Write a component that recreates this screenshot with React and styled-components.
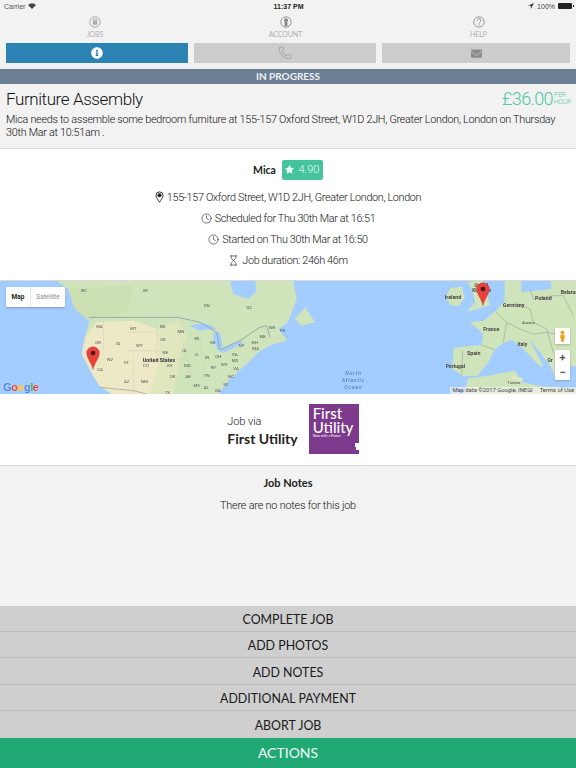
import React from "react";
import styled, { createGlobalStyle } from "styled-components";
import { Clock, Hourglass, Phone } from "lucide-react";
import { FaInfoCircle, FaEnvelope, FaStar } from "react-icons/fa";

const Global = createGlobalStyle`
  html, body { margin: 0; padding: 0; background: #f2f2f2; }
  * { box-sizing: border-box; }
  body { font-family: "Lato", "Noto Sans", sans-serif; color: #222; }
`;
const Page = styled.div`
  width: 576px; height: 768px; display: flex; flex-direction: column; overflow: hidden; background: #f2f2f2;
`;
const StatusBar = styled.div`
  height: 12px; display: grid; grid-template-columns: 1fr auto 1fr; align-items: center; padding: 0 3px 0 4px;
  font-family: "Liberation Sans", sans-serif; font-size: 7px; color: #333;
`;
const StatusLeft = styled.div`display: flex; align-items: center; gap: 3px; color: #555;`;
const StatusTime = styled.div`font-weight: 700; font-size: 7px; color: #222;`;
const StatusRight = styled.div`display: flex; align-items: center; gap: 3px; justify-content: flex-end; color: #444;`;
const Battery = styled.div`
  width: 14px; height: 6px; background: #222; border-radius: 1px; position: relative; margin-right: 1px;
  &::after { content: ""; position: absolute; right: -1.5px; top: 2px; width: 1px; height: 2px; background: #222; }
`;
const Nav = styled.nav`
  height: 31px; display: grid; grid-template-columns: 190px 191px 195px; padding-top: 4px;
`;
const NavItem = styled.div`
  display: flex; flex-direction: column; align-items: center; gap: 2px;
  font-size: 7px; color: #b0b0b0; line-height: 8px; letter-spacing: -0.1px;
  svg { display: block; }
`;
const Tabs = styled.div`
  height: 20px; display: grid; grid-template-columns: 182px 182px 188px; gap: 6px; padding: 0 6px;
`;
const Tab = styled.div`
  background: ${p => (p.$active ? "#2a83b2" : "#cccccc")};
  color: ${p => (p.$active ? "#fff" : "#8c8c8c")};
  display: flex; align-items: center; justify-content: center;
`;
const StatusStrip = styled.div`
  margin-top: 6px; height: 14.5px; background: #6b7f93; color: #f0f0f0; font-size: 10px; font-weight: 700;
  display: flex; align-items: center; justify-content: center;
`;
const JobHead = styled.section`
  height: 65px; padding: 5px 6px 0; border-bottom: 1px solid #dcdcdc; background: #f2f2f2;
`;
const TitleRow = styled.div`display: flex; justify-content: space-between; align-items: center; height: 20px;`;
const Title = styled.h1`margin: 0; font-family: "Roboto", sans-serif; font-size: 17px; font-weight: 300; color: #111; letter-spacing: -0.4px;`;
const Price = styled.div`display: flex; align-items: center; color: #4cc9a2; font-family: "Roboto", sans-serif; font-size: 18px; font-weight: 300; letter-spacing: -0.6px;`;
const PerHour = styled.span`font-size: 6.5px; line-height: 6.5px; width: 17px; padding-left: 1px; letter-spacing: -0.1px;`;
const Desc = styled.p`
  margin: 4px 0 0; font-family: "Roboto", sans-serif; font-size: 10.8px; font-weight: 300; line-height: 13.2px; color: #111; letter-spacing: -0.27px;
`;
const Details = styled.section`
  height: 132px; background: #fff; border-bottom: 1px solid #d8d8d8; display: flex; flex-direction: column; align-items: center; padding-top: 11px;
`;
const PersonRow = styled.div`display: flex; align-items: center; gap: 6px; height: 20px; margin-bottom: 7px;`;
const PersonName = styled.strong`font-size: 10.5px; color: #222;`;
const Rating = styled.div`
  width: 41px; height: 20px; background: #44c39d; border-radius: 2px; color: #e6fff6; font-family: "Roboto", sans-serif; font-weight: 300; font-size: 11px;
  display: flex; align-items: center; justify-content: center; gap: 4px;
`;
const InfoLine = styled.div`
  height: 21px; display: flex; align-items: center; gap: 3px; font-family: "Roboto", sans-serif; font-weight: 300; font-size: 10.8px; color: #111; letter-spacing: -0.33px;
  svg { flex: none; }
`;
const MapArea = styled.div`height: 113px; position: relative; overflow: hidden; background: #a3ccff;`;
const MapSvg = styled.svg`display: block; width: 576px; height: 113px; filter: blur(0.35px);`;
const MapToggle = styled.div`
  position: absolute; left: 6px; top: 6px; width: 59px; height: 20px; background: #fff; display: flex;
  font-family: "Roboto", sans-serif; font-size: 6.5px; box-shadow: 0 1px 2px rgba(0,0,0,.25); border-radius: 1px;
`;
const MapToggleItem = styled.div`
  display: flex; align-items: center; justify-content: center;
  width: ${p => (p.$active ? "25px" : "34px")};
  color: ${p => (p.$active ? "#222" : "#8a8a8a")};
  font-weight: ${p => (p.$active ? 700 : 400)};
  border-right: ${p => (p.$active ? "1px solid #e4e4e4" : "none")};
`;
const MapControl = styled.div`
  position: absolute; right: 6px; top: ${p => p.$top}px; background: #fff; box-shadow: 0 1px 2px rgba(0,0,0,.2); display: flex; flex-direction: column; align-items: center;
`;
const ZoomBtn = styled.div`
  height: 15px; width: 15px; display: flex; align-items: center; justify-content: center; color: #555;
  font: 700 11px "Roboto", sans-serif;
`;
const Attribution = styled.div`
  position: absolute; right: 0; bottom: 0; height: 7px; background: rgba(245,245,245,.65); font: 5.8px/7px "Roboto", sans-serif; color: #444;
  display: flex; gap: 7px; padding: 0 2px;
`;
const GoogleLogo = styled.div`
  position: absolute; left: 3px; bottom: 1px; font: 700 11px "Liberation Sans", sans-serif; letter-spacing: -0.4px;
  text-shadow: 0 0 1px #fff;
`;
const GLetter = styled.span`color: ${p => p.$c};`;
const Via = styled.section`
  height: 72px; background: #fff; border-bottom: 1px solid #d8d8d8; display: flex; align-items: center; justify-content: center; gap: 11px; padding-left: 10px;
`;
const ViaText = styled.div`display: flex; flex-direction: column; gap: 2px; padding-top: 3px;`;
const ViaSmall = styled.span`font-family: "Roboto", sans-serif; font-weight: 300; font-size: 11px; color: #222; line-height: 13px; letter-spacing: -0.1px;`;
const ViaName = styled.span`font-size: 14px; font-weight: 700; color: #222; line-height: 17px;`;
const Logo = styled.div`
  width: 50px; height: 50px; background: #7d3a8c; color: #fff; position: relative; padding: 2px 0 0 4px; font-family: "Lato", sans-serif;
  font-size: 15px; line-height: 14px; font-weight: 500;
  &::after { content: ""; position: absolute; right: 0; bottom: 4px; width: 3px; height: 3px; background: #fff; }
  &::before { content: ""; position: absolute; right: 0; bottom: 7px; width: 4px; height: 4px; background: #fff; }
`;
const LogoLine = styled.div`white-space: nowrap;`;
const LogoTag = styled.div`font-size: 3.5px; line-height: 5px; font-weight: 400;`;
const Notes = styled.section`flex: 1; display: flex; flex-direction: column; align-items: center; padding-top: 10px;`;
const NotesTitle = styled.strong`font-size: 11px; color: #222; line-height: 14px;`;
const NotesText = styled.div`font-family: "Roboto", sans-serif; font-weight: 300; font-size: 10.8px; color: #111; margin-top: 9px; line-height: 14px; letter-spacing: -0.18px;`;
const Actions = styled.div`display: flex; flex-direction: column;`;
const ActionButton = styled.div`
  height: 26.4px; background: #cfcfcf; border-bottom: 1px solid #bdbdbd; color: #1a1a1a; font-size: 12.4px; font-weight: 400; padding-top: 2px;
  display: flex; align-items: center; justify-content: center;
  &:last-child { border-bottom: none; }
`;
const ActionsBar = styled.div`
  height: 30.5px; background: #20a975; color: #f2fff9; font-size: 14px; display: flex; align-items: center; justify-content: center;
`;

const GREEN = "#d0e4bb";
const BLUE = "#a3ccff";
const Land = ({ d, fill = GREEN }) => <path d={d} fill={fill} />;
const Label = ({ x, y, children, size = 13, bold, color = "#555" }) => (
  <text x={x} y={y} textAnchor="middle" fontFamily="Roboto, sans-serif" fontSize={size} fontWeight={bold ? 700 : 400} fill={color}>{children}</text>
);
const OceanLabel = ({ y, children }) => (
  <text x="1060" y={y} textAnchor="middle" fontFamily="Roboto, sans-serif" fontStyle="italic" fontSize="16" letterSpacing="2" fill="#4b76b8">{children}</text>
);
const Pin = ({ x, y }) => (
  <g transform={`translate(${x} ${y})`}>
    <path d="M0 0C-3-18-19-34-19-50A19 19 0 1 1 19-50C19-34 3-18 0 0Z" fill="#e8413a" stroke="#c5352e" strokeWidth="1" />
    <circle cx="0" cy="-50" r="7" fill="#4a1210" />
  </g>
);
const usStates = [
  ["BC",252,38],["SK",436,40],["ON",620,84],["QC",748,90],["WA",298,146],["MT",400,152],["ND",488,146],["MN",543,162],
  ["OR",294,194],["ID",355,199],["WY",418,204],["SD",489,186],["WI",590,182],["MI",638,194],["NE",496,224],["IA",553,218],
  ["NV",330,246],["UT",379,255],["CO",438,263],["KS",510,263],["MO",562,265],["IL",591,232],["IN",622,240],["OH",655,236],
  ["CA",300,276],["AZ",380,312],["NM",433,312],["OK",518,298],["AR",564,298],["TN",620,295],["KY",640,270],["WV",673,262],
  ["PA",705,232],["MD",705,248],["NY",725,204],["NH",764,194],["MA",767,214],["ME",788,178],["NB",816,150],["PE",848,160],
  ["VA",708,274],["NC",693,296],["SC",678,320],["MS",590,324],["AL",619,330],["GA",654,338],["TX",502,345],
];
const countries = [
  ["Ireland",1359,61,16],["Germany",1541,84,16],["Poland",1630,63,16],["Belarus",1708,45,15],["France",1474,157,16],
  ["Italy",1567,202,15],["Spain",1421,229,16],["Portugal",1366,266,15],["Gr",1650,250,15],
];

const WorldMap = () => (
  <MapSvg viewBox="0 6 1728 339" preserveAspectRatio="none">
    <rect x="0" y="6" width="1728" height="339" fill={BLUE} />
    {/* North America */}
    <Land d="M170 6 L205 30 L225 90 L268 125 L255 175 L245 225 L282 295 L300 322 L335 345 L655 345 L690 300 L745 250 L780 215 L820 195 L862 185 L835 150 L864 130 L890 60 L880 6 Z" />
    <Land d="M690 6 L765 6 L770 35 L745 60 L700 45 Z" fill={BLUE} />
    <Land d="M885 120 L915 85 L945 130 L905 140 Z" />
    <Land d="M205 30 L400 20 L380 100 L300 112 L268 125 L225 90 Z" fill="#cbdfb3" />
    <Land d="M255 175 L290 130 L400 125 L470 150 L480 240 L450 345 L335 345 L300 322 L282 295 L245 225 Z" fill="#ede8c6" />
    <Land d="M470 150 L535 125 L560 170 L540 240 L520 345 L450 345 L480 240 Z" fill="#e0e7bf" />
    {/* Great lakes */}
    <Land d="M570 142 C600 125 640 135 650 152 L625 150 L600 155 Z" fill={BLUE} />
    <Land d="M640 160 L660 160 L668 200 L654 215 L642 190 Z" fill={BLUE} />
    <Land d="M655 215 L720 185 L730 192 L670 222 Z" fill={BLUE} />
    <path d="M268 115 L535 115 L600 130 L650 160 L660 212 L720 185 L780 145 L800 140 L810 175" fill="none" stroke="#8d9aa0" strokeWidth="2.4" />
    <path d="M300 325 L400 335 L440 345" fill="none" stroke="#9a9a9a" strokeWidth="2" />
    <path d="M310 125 L310 215 M380 160 L470 160 M470 120 L470 240 M380 215 L480 215 M400 230 L400 345 M480 240 L560 240 M540 160 L560 240 L580 300 M600 180 L610 270" fill="none" stroke="#c2c5a8" strokeWidth="1" />
    {/* Ireland, Britain */}
    <Land d="M1338 55 L1350 28 L1385 22 L1394 55 L1375 82 L1350 78 Z" />
    <Land d="M1404 10 L1424 6 L1448 6 L1462 50 L1470 78 L1440 88 L1400 98 L1426 70 L1418 40 Z" />
    {/* Europe */}
    <Land d="M1489 95 L1514 65 L1514 6 L1564 6 L1564 40 L1654 30 L1654 6 L1728 6 L1728 262 L1690 262 L1668 300 L1652 262 L1620 220 L1588 180 L1630 262 L1620 262 L1565 205 L1535 182 L1505 195 L1482 212 L1445 200 L1450 165 L1410 130 L1450 125 L1470 110 Z" />
    <Land d="M1362 206 L1445 198 L1484 212 L1462 255 L1432 290 L1388 292 L1356 268 Z" />
    <Land d="M1394 345 L1404 298 L1465 290 L1545 275 L1565 310 L1625 322 L1728 330 L1728 345 Z" />
    <Land d="M1535 292 L1570 298 L1563 310 L1540 302 Z" fill="#dfe6c4" />
    <path d="M1489 100 L1520 130 L1510 190 M1520 130 L1560 150 L1600 165 L1640 160 L1700 170 M1540 70 L1590 90 L1600 130 L1640 150 M1600 60 L1660 50 L1690 50 L1720 110 M1590 30 L1600 60 M1445 198 L1484 212 M1388 215 L1385 290 M1640 150 L1660 220" fill="none" stroke="#8f9a88" strokeWidth="1.6" />
    <g>
      {usStates.map(([t, x, y]) => <Label key={t} x={x} y={y}>{t}</Label>)}
      <Label x={477} y={248} size={16} bold color="#333">United States</Label>
      <Label x={1444} y={25} size={14} bold color="#444">United</Label>
      <Label x={1445} y={40} size={14} bold color="#444">Kingdom</Label>
      {countries.map(([t, x, y, s]) => <Label key={t} x={x} y={y} size={s} bold color="#444">{t}</Label>)}
      <Label x={1542} y={314} size={12} color="#444">Tunisia</Label>
      <Label x={1585} y={134} size={12} color="#444">Austria</Label>
      <OceanLabel y={287}>North</OceanLabel>
      <OceanLabel y={308}>Atlantic</OceanLabel>
      <OceanLabel y={330}>Ocean</OceanLabel>
    </g>
    <Pin x={279} y={272} />
    <Pin x={1449} y={80} />
  </MapSvg>
);

const JobsIcon = () => (
  <svg width="12" height="12" viewBox="0 0 12 12"><circle cx="6" cy="6" r="5.2" fill="none" stroke="#aaa" /><rect x="3.8" y="2.8" width="4.4" height="6" rx=".6" fill="#aaa" /><rect x="4.6" y="3.6" width="2.8" height="1.4" fill="#ddd" /></svg>
);
const AccountIcon = () => (
  <svg width="12" height="12" viewBox="0 0 12 12"><circle cx="6" cy="6" r="5.2" fill="none" stroke="#999" /><circle cx="6" cy="4.2" r="2" fill="#888" /><path d="M4.6 6h2.8v4.2H4.6z" fill="#888" /></svg>
);
const HelpIcon = () => (
  <svg width="12" height="12" viewBox="0 0 12 12"><circle cx="6" cy="6" r="5.2" fill="none" stroke="#999" /><path d="M4.2 4.6A1.9 1.9 0 1 1 6.9 6.3C6.2 6.7 6 7 6 7.6" fill="none" stroke="#999" strokeWidth="1" /><circle cx="6" cy="9" r=".7" fill="#999" /></svg>
);
const PinIcon = () => (
  <svg width="9" height="12" viewBox="0 0 9 12"><path d="M4.5 11.2C3 8.6 1 6.8 1 4.4A3.5 3.5 0 0 1 8 4.4C8 6.8 6 8.6 4.5 11.2Z" fill="none" stroke="#333" strokeWidth="1" /><circle cx="4.5" cy="4.2" r="2" fill="#222" /></svg>
);
const Wifi = () => (
  <svg width="8" height="6" viewBox="0 0 8 6"><path d="M0 2A5.6 5.6 0 0 1 8 2L4 6Z" fill="#444" /></svg>
);
const Arrow = () => (
  <svg width="6" height="6" viewBox="0 0 6 6"><path d="M6 0L0 2.8H2.8V6Z" fill="#333" /></svg>
);

const actions = ["COMPLETE JOB", "ADD PHOTOS", "ADD NOTES", "ADDITIONAL PAYMENT", "ABORT JOB"];

export default function App() {
  return (
    <Page>
      <Global />
      <StatusBar>
        <StatusLeft>Carrier <Wifi /></StatusLeft>
        <StatusTime>11:37 PM</StatusTime>
        <StatusRight><Arrow /> 100% <Battery /></StatusRight>
      </StatusBar>
      <Nav>
        <NavItem><JobsIcon />JOBS</NavItem>
        <NavItem><AccountIcon />ACCOUNT</NavItem>
        <NavItem><HelpIcon />HELP</NavItem>
      </Nav>
      <Tabs>
        <Tab $active><FaInfoCircle size={12} /></Tab>
        <Tab><Phone size={14} strokeWidth={1} /></Tab>
        <Tab><FaEnvelope size={11} /></Tab>
      </Tabs>
      <StatusStrip>IN PROGRESS</StatusStrip>
      <JobHead>
        <TitleRow>
          <Title>Furniture Assembly</Title>
          <Price>£36.00<PerHour>PER HOUR</PerHour></Price>
        </TitleRow>
        <Desc>Mica needs to assemble some bedroom furniture at 155-157 Oxford Street, W1D 2JH, Greater London, London on Thursday 30th Mar at 10:51am .</Desc>
      </JobHead>
      <Details>
        <PersonRow>
          <PersonName>Mica</PersonName>
          <Rating><FaStar size={9} />4.90</Rating>
        </PersonRow>
        <InfoLine><PinIcon />155-157 Oxford Street, W1D 2JH, Greater London, London</InfoLine>
        <InfoLine><Clock size={11} strokeWidth={1.2} />Scheduled for Thu 30th Mar at 16:51</InfoLine>
        <InfoLine><Clock size={11} strokeWidth={1.2} />Started on Thu 30th Mar at 16:50</InfoLine>
        <InfoLine><Hourglass size={11} strokeWidth={1.2} />Job duration: 246h 46m</InfoLine>
      </Details>
      <MapArea>
        <WorldMap />
        <MapToggle>
          <MapToggleItem $active>Map</MapToggleItem>
          <MapToggleItem>Satellite</MapToggleItem>
        </MapToggle>
        <MapControl $top={47}>
          <svg width="15" height="16" viewBox="0 0 16 16"><circle cx="8" cy="4" r="2" fill="#e9a21b" /><path d="M6 6.5h4l.6 4H9.5V14h-3v-3.5H5.4z" fill="#e9a21b" /></svg>
        </MapControl>
        <MapControl $top={69}>
          <ZoomBtn>+</ZoomBtn>
          <ZoomBtn>−</ZoomBtn>
        </MapControl>
        <GoogleLogo>
          <GLetter $c="#4285f4">G</GLetter><GLetter $c="#ea4335">o</GLetter><GLetter $c="#fbbc05">o</GLetter><GLetter $c="#4285f4">g</GLetter><GLetter $c="#34a853">l</GLetter><GLetter $c="#ea4335">e</GLetter>
        </GoogleLogo>
        <Attribution><span>Map data ©2017 Google, INEGI</span><span>Terms of Use</span></Attribution>
      </MapArea>
      <Via>
        <ViaText>
          <ViaSmall>Job via</ViaSmall>
          <ViaName>First Utility</ViaName>
        </ViaText>
        <Logo>
          <LogoLine>First</LogoLine>
          <LogoLine>Utility</LogoLine>
          <LogoTag>Now with a Power</LogoTag>
        </Logo>
      </Via>
      <Notes>
        <NotesTitle>Job Notes</NotesTitle>
        <NotesText>There are no notes for this job</NotesText>
      </Notes>
      <Actions>
        {actions.map(a => <ActionButton key={a}>{a}</ActionButton>)}
      </Actions>
      <ActionsBar>ACTIONS</ActionsBar>
    </Page>
  );
}
